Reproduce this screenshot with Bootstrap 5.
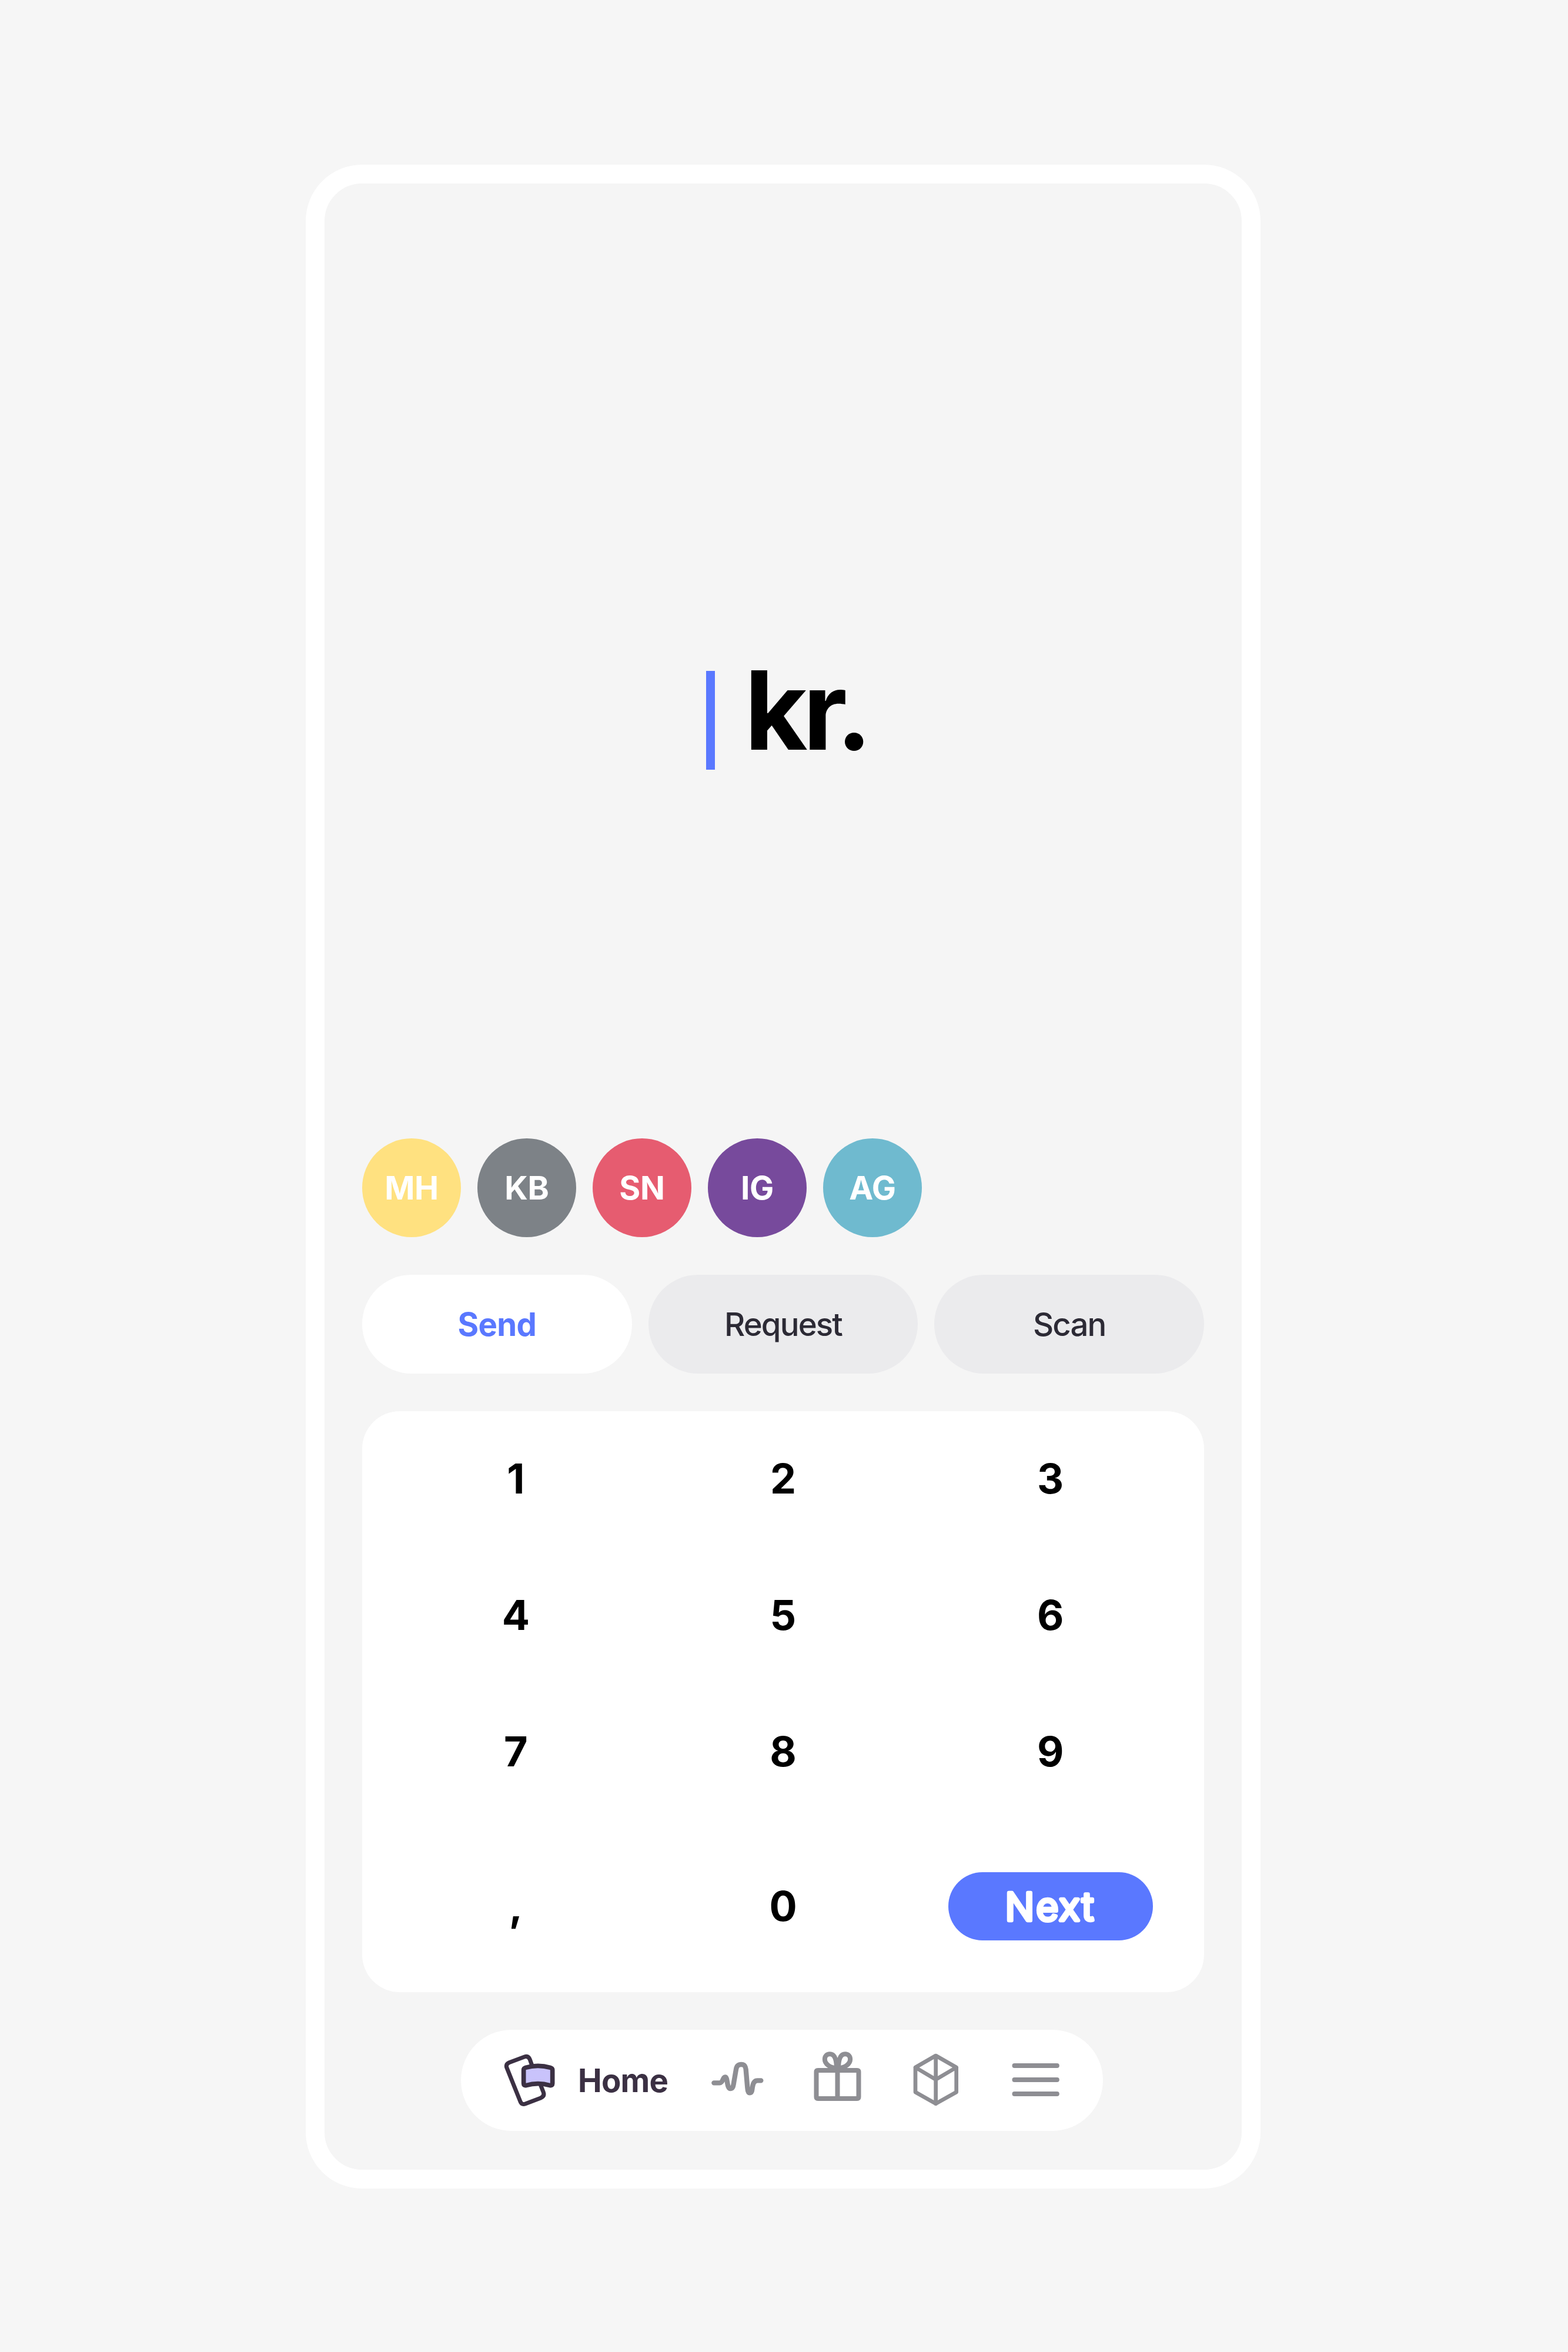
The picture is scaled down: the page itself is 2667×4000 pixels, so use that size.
<!DOCTYPE html>
<html lang="en">
<head>
<meta charset="utf-8">
<meta name="viewport" content="width=device-width, initial-scale=1">
<title>Send money</title>
<link href="https://cdn.jsdelivr.net/npm/bootstrap@5.3.0/dist/css/bootstrap.min.css" rel="stylesheet">
<style>
  body { background: #f6f6f6; font-family: Inter, "Liberation Sans", sans-serif; min-height: 4000px; padding: 280px 0 0 520px; }
  .phone { width: 1624px; height: 3442px; border: 32px solid #fff; border-radius: 96px; background: #f5f5f5; padding: 0 64px; }
  .amount { height: 1624px; padding: 829px 0 0 13px; gap: 50px; }
  .caret { width: 15px; height: 168px; background: #5a78ff; }
  .currency { font-size: 185px; font-weight: 720; line-height: 135px; letter-spacing: -7.8px; color: #000; }
  .contacts { gap: 28px; margin-bottom: 64px; }
  .contact { width: 168px; height: 168px; font-size: 55px; font-weight: 650; letter-spacing: -.3px; color: #fff; }
  .c-yellow { background: #ffe180; } .c-gray { background: #7d8287; } .c-red { background: #e65c70; }
  .c-purple { background: #774a9c; } .c-teal { background: #6fbacf; }
  .modes { gap: 28px; margin-bottom: 64px; }
  .mode, .mode:hover { flex: 1 1 0; height: 168px; padding: 2px 0 0; border: 0; font-size: 54.5px; font-weight: 500; letter-spacing: -1.85px; color: #2c2a35; background: #ebebed; }
  .mode.active, .mode.active:hover { background: #fff; color: #5a78ff; font-weight: 670; letter-spacing: -.7px; }
  .keypad { height: 988px; border-radius: 64px; padding: 0 34px; grid-template-columns: repeat(3, 1fr); grid-template-rows: repeat(3, 229px) 1fr; gap: 3px 0; margin-bottom: 64px; }
  .key { padding: 0; border: 0; font-size: 70px; font-weight: 700; line-height: 1; color: #000; }
  .next { width: 348px; height: 116px; padding: 0; border: 0; background: #5a78ff; overflow: hidden; }
  .next text { font-size: 65px; font-weight: 300; letter-spacing: 3.2px; fill: #fff; stroke: #fff; stroke-width: 6.4px; stroke-linejoin: round; text-anchor: middle; }
  .tabbar { width: 1092px; height: 172px; padding: 0 0 0 68px; gap: 72.5px; margin-left: 168px; }
  .tabbar svg { width: 96px; height: 96px; display: block; fill: none; stroke: currentColor; stroke-linecap: round; stroke-linejoin: round; }
  .tab { color: #8e8e93; }
  .tab-home { width: 282.5px; gap: 35px; color: #3b3043; font-size: 54.5px; font-weight: 660; letter-spacing: -.8px; }
  .tab-home span { padding-top: 1px; }
</style>
</head>
<body>
<main class="phone">
  <section class="amount d-flex justify-content-center align-items-start">
    <div class="caret"></div>
    <div class="currency">kr.</div>
  </section>

  <section class="contacts d-flex">
    <div class="contact c-yellow rounded-circle d-flex align-items-center justify-content-center">MH</div>
    <div class="contact c-gray rounded-circle d-flex align-items-center justify-content-center">KB</div>
    <div class="contact c-red rounded-circle d-flex align-items-center justify-content-center">SN</div>
    <div class="contact c-purple rounded-circle d-flex align-items-center justify-content-center">IG</div>
    <div class="contact c-teal rounded-circle d-flex align-items-center justify-content-center">AG</div>
  </section>

  <section class="modes d-flex">
    <button class="mode btn rounded-pill active">Send</button>
    <button class="mode btn rounded-pill">Request</button>
    <button class="mode btn rounded-pill">Scan</button>
  </section>

  <section class="keypad d-grid bg-white">
    <button class="key btn">1</button><button class="key btn">2</button><button class="key btn">3</button>
    <button class="key btn">4</button><button class="key btn">5</button><button class="key btn">6</button>
    <button class="key btn">7</button><button class="key btn">8</button><button class="key btn">9</button>
    <button class="key btn">,</button><button class="key btn">0</button>
    <button class="next btn rounded-pill align-self-center mx-auto">
      <svg class="d-block" width="348" height="116" viewBox="0 0 348 116"><text x="173.5" y="82.2">Next</text></svg>
    </button>
  </section>

  <nav class="tabbar d-flex align-items-center bg-white rounded-pill">
    <a class="tab-home d-flex align-items-center text-decoration-none flex-shrink-0" href="#">
      <svg class="flex-shrink-0" viewBox="216 150 288 288">
        <path stroke-width="21" d="M374 216 364 188Q356 167 336 174L258 203Q239 211 246 230L315 402Q322 421 342 413L419 384Q440 375 433 355L420 322"/>
        <path stroke-width="23" fill="#c9c3fb" d="M332 241Q332 232 342 229Q405 211 468 229Q479 232 479 241V310Q479 322 467 320Q405 302 344 320Q332 322 332 310Z"/>
      </svg>
      <span>Home</span>
    </a>
    <a class="tab" href="#"><svg viewBox="81 150 288 288"><path stroke-width="25" d="M103 307H132C150 307 147 277 160 277C175 277 166 336 188 336C200 336 202 322 205 302L216 238C219 220 227 213 243 213C258 213 264 222 266 238L273 320C275 343 276 358 286 358C298 358 297 343 300 326C303 307 310 295 325 295H343"/></svg></a>
    <a class="tab" href="#"><svg viewBox="586.5 150 288 288" overflow="visible"><path stroke-width="24" d="M632 243H832Q840 243 840 251V379Q840 387 832 387H632Q624 387 624 379V251Q624 243 632 243ZM732 243V387"/><path stroke-width="24" d="M727 232C727 186 716 160 693 160C677 160 667 171 667 186C667 210 693 230 727 232ZM737 232C737 186 748 160 771 160C787 160 797 171 797 186C797 210 771 230 737 232Z"/></svg></a>
    <a class="tab" href="#"><svg viewBox="132 150 288 288"><path stroke-width="20" d="M275 168 380 228V354L275 413 171 354V228ZM171 228 275 290 380 228M275 168V413"/></svg></a>
    <a class="tab" href="#"><svg viewBox="637.5 150 288 288"><path stroke-width="24" d="M675 219H892M675 291H892M675 363H892"/></svg></a>
  </nav>
</main>
<script src="https://cdn.jsdelivr.net/npm/bootstrap@5.3.0/dist/js/bootstrap.bundle.min.js"></script>
</body>
</html>
